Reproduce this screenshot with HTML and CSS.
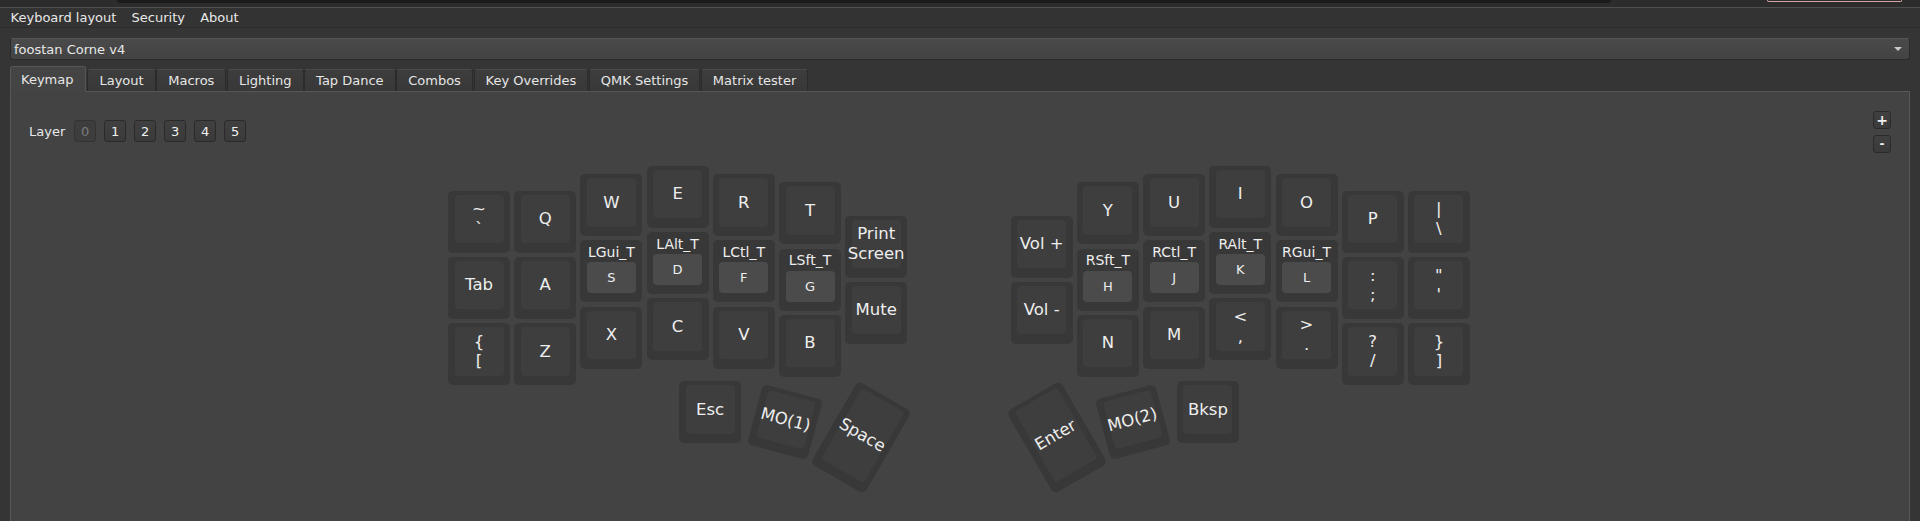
FILE: index.html
```html
<!DOCTYPE html>
<html>
<head>
<meta charset="utf-8">
<title>Vial</title>
<link rel="stylesheet" href="styles.css">
</head>
<body>
<div class="topstrip">
  <div class="shadowbar"></div>
  <div class="pill"></div>
</div>
<div class="menubar">
  <span class="menu-item">Keyboard layout</span>
  <span class="menu-item">Security</span>
  <span class="menu-item">About</span>
</div>
<div class="main">
  <div class="combo">
    <span class="combo-text">foostan Corne v4</span>
    <span class="combo-arrow"></span>
  </div>
  <div class="tabs">
    <div class="tab active">Keymap</div>
    <div class="tab">Layout</div>
    <div class="tab">Macros</div>
    <div class="tab">Lighting</div>
    <div class="tab">Tap Dance</div>
    <div class="tab">Combos</div>
    <div class="tab">Key Overrides</div>
    <div class="tab">QMK Settings</div>
    <div class="tab">Matrix tester</div>
  </div>
  <div class="pane">
    <div class="toolbar">
      <div class="layer-group">
        <span class="layer-label">Layer</span>
        <span class="lbtn current">0</span>
        <span class="lbtn">1</span>
        <span class="lbtn">2</span>
        <span class="lbtn">3</span>
        <span class="lbtn">4</span>
        <span class="lbtn">5</span>
      </div>
      <div class="zoom-group">
        <span class="zbtn plus">+</span>
        <span class="zbtn minus">-</span>
      </div>
    </div>
    <div class="kbd">
      <!-- left half -->
      <div class="key" style="left:8px;top:30.7px"><div class="cap two"><span>~</span><span>`</span></div></div>
      <div class="key" style="left:8px;top:96.9px"><div class="cap">Tab</div></div>
      <div class="key" style="left:8px;top:163.1px"><div class="cap two"><span>{</span><span>[</span></div></div>

      <div class="key" style="left:74.2px;top:30.7px"><div class="cap">Q</div></div>
      <div class="key" style="left:74.2px;top:96.9px"><div class="cap">A</div></div>
      <div class="key" style="left:74.2px;top:163.1px"><div class="cap">Z</div></div>

      <div class="key" style="left:140.4px;top:14.2px"><div class="cap">W</div></div>
      <div class="key hold" style="left:140.4px;top:80.4px"><div class="hl">LGui_T</div><div class="mask">S</div></div>
      <div class="key" style="left:140.4px;top:146.6px"><div class="cap">X</div></div>

      <div class="key" style="left:206.6px;top:5.9px"><div class="cap">E</div></div>
      <div class="key hold" style="left:206.6px;top:72.1px"><div class="hl">LAlt_T</div><div class="mask">D</div></div>
      <div class="key" style="left:206.6px;top:138.3px"><div class="cap">C</div></div>

      <div class="key" style="left:272.8px;top:14.2px"><div class="cap">R</div></div>
      <div class="key hold" style="left:272.8px;top:80.4px"><div class="hl">LCtl_T</div><div class="mask">F</div></div>
      <div class="key" style="left:272.8px;top:146.6px"><div class="cap">V</div></div>

      <div class="key" style="left:339px;top:22.4px"><div class="cap">T</div></div>
      <div class="key hold" style="left:339px;top:88.6px"><div class="hl">LSft_T</div><div class="mask">G</div></div>
      <div class="key" style="left:339px;top:154.8px"><div class="cap">B</div></div>

      <div class="key" style="left:405.2px;top:55.5px"><div class="cap two"><span>Print</span><span>Screen</span></div></div>
      <div class="key" style="left:405.2px;top:121.7px"><div class="cap">Mute</div></div>

      <!-- right half -->
      <div class="key" style="left:570.7px;top:55.5px"><div class="cap">Vol +</div></div>
      <div class="key" style="left:570.7px;top:121.7px"><div class="cap">Vol -</div></div>

      <div class="key" style="left:636.9px;top:22.4px"><div class="cap">Y</div></div>
      <div class="key hold" style="left:636.9px;top:88.6px"><div class="hl">RSft_T</div><div class="mask">H</div></div>
      <div class="key" style="left:636.9px;top:154.8px"><div class="cap">N</div></div>

      <div class="key" style="left:703.1px;top:14.2px"><div class="cap">U</div></div>
      <div class="key hold" style="left:703.1px;top:80.4px"><div class="hl">RCtl_T</div><div class="mask">J</div></div>
      <div class="key" style="left:703.1px;top:146.6px"><div class="cap">M</div></div>

      <div class="key" style="left:769.3px;top:5.9px"><div class="cap">I</div></div>
      <div class="key hold" style="left:769.3px;top:72.1px"><div class="hl">RAlt_T</div><div class="mask">K</div></div>
      <div class="key" style="left:769.3px;top:138.3px"><div class="cap two"><span>&lt;</span><span>,</span></div></div>

      <div class="key" style="left:835.5px;top:14.2px"><div class="cap">O</div></div>
      <div class="key hold" style="left:835.5px;top:80.4px"><div class="hl">RGui_T</div><div class="mask">L</div></div>
      <div class="key" style="left:835.5px;top:146.6px"><div class="cap two"><span>&gt;</span><span>.</span></div></div>

      <div class="key" style="left:901.7px;top:30.7px"><div class="cap">P</div></div>
      <div class="key" style="left:901.7px;top:96.9px"><div class="cap two"><span>:</span><span>;</span></div></div>
      <div class="key" style="left:901.7px;top:163.1px"><div class="cap two"><span>?</span><span>/</span></div></div>

      <div class="key" style="left:967.9px;top:30.7px"><div class="cap two"><span>|</span><span>\</span></div></div>
      <div class="key" style="left:967.9px;top:96.9px"><div class="cap two"><span>"</span><span>'</span></div></div>
      <div class="key" style="left:967.9px;top:163.1px"><div class="cap two"><span>}</span><span>]</span></div></div>

      <!-- thumbs -->
      <div class="key" style="left:239.1px;top:221.3px"><div class="cap">Esc</div></div>
      <div class="key" style="left:313.8px;top:230.8px;transform:rotate(15deg)"><div class="cap">MO(1)</div></div>
      <div class="key tall" style="left:390.2px;top:229.6px;transform:rotate(30deg)"><div class="cap">Space</div></div>
      <div class="key tall" style="left:585.8px;top:229.6px;transform:rotate(-30deg)"><div class="cap">Enter</div></div>
      <div class="key" style="left:662.2px;top:230.8px;transform:rotate(-15deg)"><div class="cap">MO(2)</div></div>
      <div class="key" style="left:736.9px;top:221.3px"><div class="cap">Bksp</div></div>
    </div>
  </div>
</div>
</body>
</html>
```
FILE: styles.css
```css
html, body {
  margin: 0;
  padding: 0;
}
body {
  width: 1920px;
  height: 521px;
  overflow: hidden;
  background: #353535;
  font-family: "DejaVu Sans", "Noto Sans", sans-serif;
  font-size: 13px;
  color: #e8e8e8;
}
.topstrip {
  height: 7px;
  background: #2c2c2c;
  border-bottom: 1px solid #505050;
  display: flex;
  align-items: flex-start;
}
.shadowbar {
  margin-left: 117px;
  width: 1494px;
  height: 3px;
  background: #1b1b1b;
  border-radius: 0 0 5px 5px;
}
.pill {
  margin-left: auto;
  margin-right: 18px;
  width: 133px;
  height: 1px;
  border: 1px solid #d6a4a4;
  border-top: none;
  border-radius: 0 0 4px 4px;
}
.menubar {
  height: 19px;
  background: #333333;
  border-bottom: 1px solid #2d2d2d;
  display: flex;
  align-items: center;
  padding-left: 3px;
}
.menu-item {
  padding: 0 7.6px;
  line-height: 19px;
}
.main {
  padding: 10px 10px 0 10px;
}
.combo {
  height: 20px;
  border: 1px solid #2a2a2a;
  border-top-color: #555555;
  border-radius: 3px;
  background: linear-gradient(#4a4a4a, #434343);
  display: flex;
  align-items: center;
  justify-content: space-between;
  padding: 0 7px 0 3px;
}
.combo-arrow {
  width: 0;
  height: 0;
  border-left: 4px solid transparent;
  border-right: 4px solid transparent;
  border-top: 4px solid #c8c8c8;
}
.tabs {
  margin-top: 7px;
  height: 24px;
  display: flex;
  align-items: flex-end;
  font-size: 13px;
}
.tab {
  height: 21px;
  line-height: 21px;
  padding: 0 11px 0 11px;
  margin-right: 0.6px;
  border: 1px solid #2b2b2b;
  border-top-color: #4a4a4a;
  border-bottom: none;
  border-radius: 3px 3px 0 0;
  background: linear-gradient(#3d3d3d, #383838);
  color: #e6e6e6;
}
.tab.active {
  height: 25px;
  line-height: 25px;
  margin-bottom: -1px;
  position: relative;
  z-index: 1;
  background: #444444;
  border-color: #575757;
  padding: 0 12px 0 10px;
  margin-right: 1px;
}
.pane {
  height: 460px;
  background: #434343;
  border: 1px solid #575757;
  border-bottom: none;
}
.toolbar {
  display: flex;
  justify-content: space-between;
  align-items: flex-start;
  padding: 19px 18px 0 18px;
  height: 42px;
}
.layer-group {
  display: flex;
  align-items: center;
  margin-top: 9px;
  font-size: 13px;
}
.layer-label {
  margin-right: 9px;
}
.lbtn {
  width: 22px;
  height: 22px;
  box-sizing: border-box;
  border: 1px solid #2a2a2a;
  border-radius: 3px;
  background: linear-gradient(#404040, #3a3a3a);
  display: flex;
  align-items: center;
  justify-content: center;
  margin-right: 8px;
  font-size: 13px;
  color: #f0f0f0;
}
.lbtn.current {
  background: #3d3d3d;
  border-color: #333333;
  color: #7a7a7a;
}
.zoom-group {
  display: flex;
  flex-direction: column;
  gap: 6px;
}
.zbtn {
  width: 18px;
  height: 18px;
  box-sizing: border-box;
  border: 1px solid #2a2a2a;
  border-radius: 3px;
  background: linear-gradient(#404040, #3a3a3a);
  display: flex;
  align-items: center;
  justify-content: center;
  color: #eeeeee;
  font-weight: bold;
  font-size: 14px;
}
.zbtn.minus {
  font-size: 12px;
}
.kbd {
  position: relative;
  width: 1040px;
  height: 340px;
  margin: 7px auto 0 auto;
}
.key {
  position: absolute;
  width: 62px;
  height: 62px;
  box-sizing: border-box;
  padding: 4px 6.5px 9.5px 6.5px;
  background: #383838;
  border-radius: 5px;
  transform-origin: 50% 50%;
}
.key.tall {
  height: 95px;
}
.cap {
  height: 100%;
  background: #3e3e3e;
  border-radius: 4px;
  display: flex;
  align-items: center;
  justify-content: center;
  text-align: center;
  font-size: 16.5px;
  line-height: 19.5px;
  color: #eeeeee;
  white-space: nowrap;
}
.cap.two {
  flex-direction: column;
}
.key.hold {
  padding: 0 6.5px 9px 6.5px;
  display: flex;
  flex-direction: column;
}
.hl {
  height: 22px;
  display: flex;
  align-items: center;
  justify-content: center;
  font-size: 14px;
  color: #eeeeee;
  white-space: nowrap;
  padding-top: 1px;
  box-sizing: border-box;
}
.mask {
  flex: 1;
  background: #4b4b4b;
  border-radius: 4px;
  display: flex;
  align-items: center;
  justify-content: center;
  font-size: 13px;
  color: #eeeeee;
}
```
